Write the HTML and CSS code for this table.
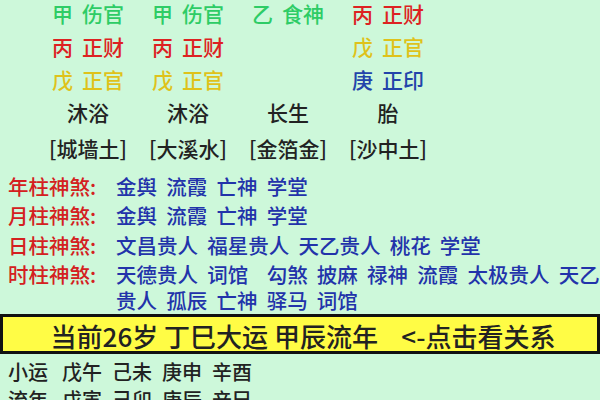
FILE: index.html
```html
<!DOCTYPE html>
<html lang="zh">
<head>
<meta charset="utf-8">
<link rel="stylesheet" href="styles.css">
</head>
<body>
<div class="pillars">
  <div class="c g">甲 伤官</div><div class="c g">甲 伤官</div><div class="c g">乙 食神</div><div class="c r">丙 正财</div>
  <div class="c r">丙 正财</div><div class="c r">丙 正财</div><div class="c"></div><div class="c y">戊 正官</div>
  <div class="c y">戊 正官</div><div class="c y">戊 正官</div><div class="c"></div><div class="c b">庚 正印</div>
  <div class="c k">沐浴</div><div class="c k">沐浴</div><div class="c k">长生</div><div class="c k">胎</div>
  <div class="c k">[城墙土]</div><div class="c k">[大溪水]</div><div class="c k">[金箔金]</div><div class="c k">[沙中土]</div>
</div>
<div class="shensha">
  <div class="ss-row"><span class="ss-label">年柱神煞:</span><span class="ss-val">金舆 流霞 亡神 学堂</span></div>
  <div class="ss-row"><span class="ss-label">月柱神煞:</span><span class="ss-val">金舆 流霞 亡神 学堂</span></div>
  <div class="ss-row"><span class="ss-label">日柱神煞:</span><span class="ss-val">文昌贵人 福星贵人 天乙贵人 桃花 学堂</span></div>
  <div class="ss-row"><span class="ss-label">时柱神煞:</span><span class="ss-val">天德贵人 词馆&nbsp; 勾煞 披麻 禄神 流霞 太极贵人 天乙<br>贵人 孤辰 亡神 驿马 词馆</span></div>
</div>
<div class="bar">当前26岁 丁巳大运 甲辰流年&nbsp;&nbsp;&nbsp; &lt;-点击看关系</div>
<div class="yun">
  <div class="yun-row"><span class="yun-label">小运</span> 戊午 己未 庚申 辛酉</div>
  <div class="yun-row"><span class="yun-label">流年</span> 戊寅 己卯 庚辰 辛巳</div>
</div>
</body>
</html>
```
FILE: styles.css
```css
html, body {
  margin: 0;
  padding: 0;
  width: 600px;
  height: 400px;
  overflow: hidden;
  background: #cdf8da;
  font-family: "Noto Sans CJK SC", "Noto Sans", sans-serif;
  font-weight: 500;
  color: #222;
}
.pillars {
  display: grid;
  grid-template-columns: repeat(4, 100px);
  grid-template-rows: 33px 33px 33px 33px 39px;
  margin: -4px 0 0 38px;
  font-size: 21px;
  word-spacing: 4.5px;
}
.c {
  display: flex;
  align-items: center;
  justify-content: center;
  white-space: nowrap;
}
.g { color: #2ecc66; }
.r { color: #dd2222; }
.y { color: #dfc21a; }
.b { color: #2244aa; }
.k { color: #222; }
.shensha {
  margin-top: 6px;
  padding-left: 8px;
  font-size: 20.5px;
  line-height: 26px;
  display: flex;
  flex-direction: column;
  gap: 3.3px;
}
.ss-row {
  display: flex;
  white-space: nowrap;
}
.ss-label {
  color: #d42020;
  width: 108px;
}
.ss-val {
  color: #2233aa;
  word-spacing: 4.6px;
}
.bar {
  margin-top: 1px;
  height: 40px;
  box-sizing: border-box;
  border: 3px solid #111;
  background: #fffc45;
  font-size: 26px;
  line-height: 38px;
  padding-left: 6px;
  text-align: center;
  color: #222;
  white-space: nowrap;
  overflow: hidden;
}
.yun {
  margin-top: 4px;
  padding-left: 8px;
  font-size: 20px;
  line-height: 28px;
  word-spacing: 5.5px;
}
.yun-label {
  margin-right: 4px;
}
```
